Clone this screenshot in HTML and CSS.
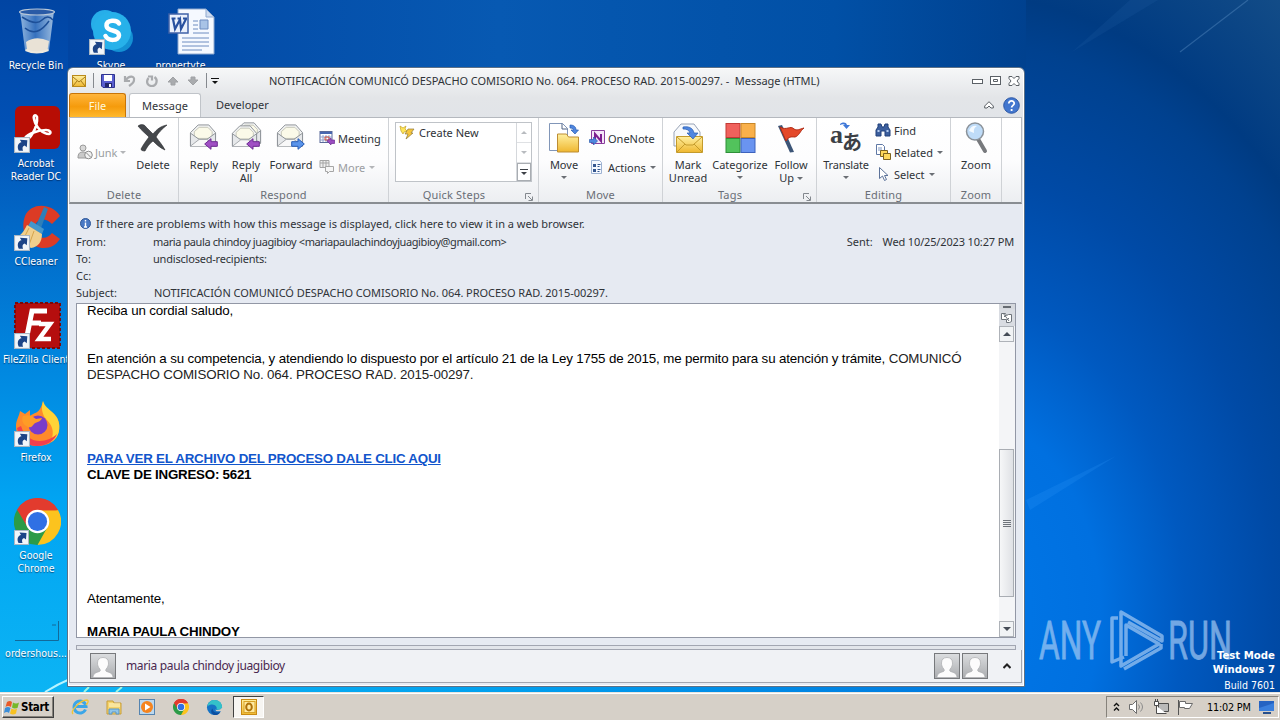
FILE: index.html
```
<!DOCTYPE html>
<html lang="en">

<head>
    <meta charset="UTF-8">
    <meta name="viewport" content="width=device-width, initial-scale=1.0">
    <title>Message (HTML)</title>
    <link rel="stylesheet" href="styles.css">
</head>

<body>
    <!-- Shared icons -->
    <svg width="0" height="0" class="defs">
        <defs>
            <linearGradient id="gold" x1="0" y1="0" x2="0" y2="1">
                <stop offset="0" stop-color="#fff0a0" />
                <stop offset="1" stop-color="#efb730" />
            </linearGradient>
            <linearGradient id="glass" x1="0" y1="0" x2="1" y2="0">
                <stop offset="0" stop-color="#a9c8e8" />
                <stop offset=".45" stop-color="#3f78c2" />
                <stop offset="1" stop-color="#b5cfe9" />
            </linearGradient>
            <linearGradient id="gray" x1="0" y1="0" x2="0" y2="1">
                <stop offset="0" stop-color="#dcdee0" />
                <stop offset="1" stop-color="#a9abae" />
            </linearGradient>
        </defs>
        <symbol id="shortcut" viewBox="0 0 15 15">
            <rect x=".5" y=".5" width="14" height="14" fill="#f2f6fa" stroke="#a9b6c4" />
            <path d="M4.500 13C2.500 9 4 5.500 7 5L5.500 2.500 12.500 3l-.5 6.500-2-1.500C8 8.500 7.500 10.500 8.500 13z" fill="#1c4487" />
        </symbol>
        <symbol id="open-mail" viewBox="0 0 28 28">
            <path d="M1 10L9 2h11l7 8v14H1z" fill="#f1f2f2" stroke="#8d9297" />
            <path d="M5 9l5-4.500h9L23.500 9v7H5z" fill="#fbfae9" stroke="#c5c6b8" />
            <path d="M1 10.500l9 6.500h8l9-6.500V24H1z" fill="#e6e8ea" stroke="#8d9297" />
            <path d="M1 24l9-7h8l9 7" fill="#f8f8f8" stroke="#a3a7ab" />
        </symbol>
        <symbol id="arrow-left" viewBox="0 0 14 12">
            <path d="M.7 6L7 .7v3h6.300v4.600H7v3z" fill="#a04fc4" stroke="#6d2b92" />
        </symbol>
        <symbol id="arrow-right" viewBox="0 0 14 12">
            <path d="M13.300 6L7 .7v3H.7v4.600H7v3z" fill="#5a94ea" stroke="#275cb5" />
        </symbol>
        <symbol id="person" viewBox="0 0 26 26">
            <rect x=".5" y=".5" width="25" height="25" fill="url(#gray)" stroke="#77797c" />
            <path d="M3 24.500c0-4 3-5 6.500-6 1-.5 1-1.500.3-2.500C8 14 7.500 12 7.500 10 7.500 6.500 9.500 4.500 13 4.500s5.500 2 5.500 5.500c0 2-.5 4-2.300 6-.7 1-.7 2 .3 2.500 3.500 1 6.500 2 6.500 6z" fill="#fcfcfc" stroke="#a9abad" stroke-width=".7" />
        </symbol>
        <symbol id="chrome" viewBox="0 0 48 48">
            <path d="M24 24L3.200 12A24 24 0 0 1 44.800 12z" fill="#e23b2e" />
            <path d="M24 24L44.800 12A24 24 0 0 1 24 48z" fill="#fcc31e" />
            <path d="M24 24L24 48A24 24 0 0 1 3.200 12z" fill="#2c9b47" />
            <path d="M24 12.500h20.800L34 30 24 48l10-18z" fill="#fcc31e" />
            <path d="M3.200 12L14 30h12l8 0-10 18z" fill="#2c9b47" />
            <path d="M3.200 12L14 30l10-17.500h20.800A24 24 0 0 0 3.200 12z" fill="#e23b2e" />
            <circle cx="24" cy="24" r="12" fill="#fff" />
            <circle cx="24" cy="24" r="9.800" fill="#2f70e4" />
        </symbol>
        <symbol id="launcher" viewBox="0 0 8 8">
            <path d="M.5 6V.5H6M3 3l4 4M7.500 3.500v4h-4" fill="none" stroke="#83888e" />
        </symbol>
    </svg>

    <div class="desktop">
        <svg class="light" width="1280" height="692" viewBox="0 0 1280 692">
            <path d="M1180 52L1248 0" stroke="#5f93c8" stroke-width="1.200" opacity=".4" />
            <path d="M1072 52L1130 0h28z" fill="#2a6ab0" opacity=".16" />
            <path d="M1026 500l90-44-86 54z" fill="#39a0ff" opacity=".18" />
            <path d="M45 692Q58 684 70 679" stroke="#b8f4ff" stroke-width="2" fill="none" />
            <path d="M84 692l5-5M116 692l6-5" stroke="#9df5e4" stroke-width="2" />
        </svg>

        <div class="desktop-icons">
            <div class="shortcut">
                <svg width="48" height="48" viewBox="0 0 48 48">
                    <path d="M7 3h34l-5 39q-12 6-24 0z" fill="url(#glass)" opacity=".85" />
                    <path d="M13 34q10-7 23-1l-1.500 9q-10 5-20.500 0z" fill="#e9e2d6" />
                    <path d="M9 9q14 9 20 3t11 0M12 20q12 10 24-7" fill="none" stroke="#1d4f98" stroke-width="1.500" />
                    <ellipse cx="24" cy="4" rx="17.500" ry="3" fill="#2a5ba6" stroke="#b9c8d8" stroke-width="1.200" />
                    <path d="M12.500 42q11 5 23 0" fill="none" stroke="#efe9dd" stroke-width="2" />
                </svg>
                <span>Recycle Bin</span>
            </div>
            <div class="shortcut skype">
                <svg width="48" height="48" viewBox="0 0 48 48">
                    <circle cx="17" cy="16" r="14" fill="#27aee9" />
                    <circle cx="31" cy="30" r="14" fill="#1491d4" />
                    <circle cx="24" cy="23" r="19" fill="#27b1ea" />
                    <path d="M31 15.500C29 11.500 18.500 11.500 18.500 17.500c0 6.500 12.500 3.500 12.500 10 0 5.500-10.500 6-13.500.5" fill="none" stroke="#fff" stroke-width="4.500" stroke-linecap="round" />
                    <use href="#shortcut" x="1" y="31" width="16" height="16" />
                </svg>
                <span>Skype</span>
            </div>
            <div class="shortcut document">
                <svg width="48" height="48" viewBox="0 0 48 48">
                    <path d="M10 1h28l8 8v37H10z" fill="#f5f9ff" stroke="#8fa9cf" />
                    <path d="M38 1v8h8z" fill="#cfdcef" stroke="#8fa9cf" />
                    <path d="M25 13h5M25 17h5M25 21h5M25 25h16M14 30h27M14 34h27M14 38h27M14 42h20" stroke="#6d8cc0" />
                    <path d="M32 12h8v9h-8z" fill="#a8c3e6" stroke="#6d8cc0" />
                    <rect x="1" y="6" width="19" height="19" fill="#e9f0fc" stroke="#3f62a8" stroke-width="1.500" />
                    <path d="M3.500 10.500h4M9.500 10.500h3M15 10.500h4M5 11l2 10 5-9.500 1 9.500 5-10" fill="none" stroke="#27509f" stroke-width="2.200" />
                </svg>
                <span>propertyte...</span>
            </div>
            <div class="shortcut">
                <svg width="48" height="48" viewBox="0 0 48 48">
                    <rect x="2" y="0" width="45" height="43" rx="6" fill="#b70d04" />
                    <path d="M12 34c5 0 13-13 12-23-1-3-4-2-3 2 2 9 9 15 15 15 3-1 1-4-3-4-8 0-18 4-21 8-1 1-1 2 0 2z" fill="none" stroke="#fff" stroke-width="2.600" />
                    <use href="#shortcut" x="1" y="31" width="16" height="16" />
                </svg>
                <span>Acrobat<br>Reader DC</span>
            </div>
            <div class="shortcut">
                <svg width="48" height="48" viewBox="0 0 48 48">
                    <path d="M47 12C39-1 18-2 12 12 6 29 17 44 31 44c7 0 12-3 16-9l-8-6c-5 7-14 6-17-1-3-9 7-18 17-8z" fill="#dc3b25" />
                    <path d="M31 3l4 2-7 19-5-2z" fill="#2e7fb8" />
                    <path d="M18 17l13 8-2 5-14-8z" fill="#4397cc" />
                    <path d="M14 21l15 9c0 8-4 13-11 14L2 34c6-2 9-7 12-13z" fill="#f0cf8c" />
                    <path d="M16 24l-7 14M21 27l-5 14" stroke="#d4a44d" />
                    <use href="#shortcut" x="1" y="31" width="16" height="16" />
                </svg>
                <span>CCleaner</span>
            </div>
            <div class="shortcut">
                <svg width="48" height="48" viewBox="0 0 48 48">
                    <rect x="2" y="1" width="45" height="45" fill="#b50e0e" stroke="#7d0808" stroke-width="2" stroke-dasharray="3 2" />
                    <path d="M14 34l5-25h15M17 21h11" fill="none" stroke="#fff" stroke-width="5" />
                    <path d="M26 22h11L26 37h12" fill="none" stroke="#fff" stroke-width="4.500" />
                    <use href="#shortcut" x="1" y="31" width="16" height="16" />
                </svg>
                <span>FileZilla Client</span>
            </div>
            <div class="shortcut">
                <svg width="48" height="48" viewBox="0 0 48 48">
                    <path d="M30 1c1 7 4 7 9 11 7 6 8 12 7 19-2 10-11 15-22 15C11 46 3 37 3 26c0-6 3-9 4-15l5 3 5-4v6c5-4 10-2 13-15z" fill="#ff8a2b" />
                    <path d="M30 1c2 6 5 7 9 11 7 6 8 12 7 19-1 5-4 9-8 11 4-12 1-17-6-24-3-6-4-9-2-17z" fill="#ffd338" />
                    <path d="M4 28c2 11 10 18 20 18 10 0 18-6 20-12-9 9-30 12-36-8z" fill="#f23f4e" />
                    <circle cx="25" cy="25" r="9.500" fill="#7a3cc9" />
                    <path d="M10 16c6-2 9 0 13 3l6-1c-1 4-6 4-8 6s-2 4-6 3c-5-2-7-7-5-11z" fill="#ff9c26" />
                    <use href="#shortcut" x="1" y="31" width="16" height="16" />
                </svg>
                <span>Firefox</span>
            </div>
            <div class="shortcut">
                <svg width="48" height="48" viewBox="0 0 48 48">
                    <use href="#chrome" x="1" width="47" height="47" />
                    <use href="#shortcut" x="1" y="32" width="15" height="15" />
                </svg>
                <span>Google<br>Chrome</span>
            </div>
            <div class="shortcut">
                <svg width="48" height="48" viewBox="0 0 48 48">
                    <path d="M2 44.500h43.500V25M39 29h4" fill="none" stroke="#12699a" />
                </svg>
                <span>ordershous...</span>
            </div>
        </div>

        <div class="watermark">
            <svg width="194" height="64" viewBox="0 0 194 64">
                <g class="watermark-text">
                    <text x="1" y="50" textLength="62" lengthAdjust="spacingAndGlyphs">ANY</text>
                    <text x="130" y="50" textLength="64" lengthAdjust="spacingAndGlyphs">RUN</text>
                </g>
                <g fill="none" stroke="#a9cdf5" stroke-width="3.500" stroke-linejoin="round" opacity=".68">
                    <path d="M80 9h-6v44l12-5" />
                    <path d="M88 47V16l33 19-38 22V3l41 24v5L90 13" />
                    <path d="M86 60l37-21v-4" />
                </g>
            </svg>
            <div class="build">
                <b>Test Mode</b>
                <b>Windows 7</b>
                <span>Build 7601</span>
            </div>
        </div>

        <div class="window">
            <div class="title-bar">
                <div class="quick-access">
                    <svg width="14" height="12" viewBox="0 0 14 12">
                        <rect x=".5" y=".5" width="13" height="11" fill="url(#gold)" stroke="#b98a1c" />
                        <path d="M1 2l6 5 6-5M1 11l4-5M13 11L9 6" fill="none" stroke="#a87b18" />
                    </svg>
                    <i class="bar"></i>
                    <svg width="14" height="14" viewBox="0 0 14 14">
                        <path d="M.5.5h13v13H2l-1.500-1.500z" fill="#5a5fd0" stroke="#30358f" />
                        <path d="M3 1h8v6H3z" fill="#fff" />
                        <path d="M4 9h7v4H4z" fill="#23276b" />
                        <path d="M8 10h2v3H8z" fill="#fff" />
                    </svg>
                    <svg class="faded" width="14" height="14" viewBox="0 0 14 14">
                        <path d="M2 2v5h5M3 6c3-5 9-4 8 0 0 3-2 4-5 6" fill="none" stroke="#a9abae" stroke-width="2.200" />
                    </svg>
                    <svg class="faded" width="14" height="14" viewBox="0 0 14 14">
                        <path d="M3 2.500h4v4M9.500 3c4 3 2 9-2.500 9S.5 8 3.500 4" fill="none" stroke="#a9abae" stroke-width="2.200" />
                    </svg>
                    <svg class="faded" width="12" height="12" viewBox="0 0 12 12">
                        <path d="M6 2l5 5H8v3H4V7H1z" fill="#a9abae" stroke="#a0a2a5" />
                    </svg>
                    <svg class="faded" width="12" height="12" viewBox="0 0 12 12">
                        <path d="M6 10L1 5h3V2h4v3h3z" fill="#a9abae" stroke="#a0a2a5" />
                    </svg>
                    <i class="bar"></i>
                    <svg class="customize" width="8" height="8" viewBox="0 0 8 8">
                        <path d="M0 1.500h8" stroke="#111" />
                        <path d="M1 4h6L4 7z" fill="#111" />
                    </svg>
                </div>
                <div class="title">NOTIFICACIÓN COMUNICÓ DESPACHO COMISORIO No. 064. PROCESO RAD. 2015-00297. - &nbsp;Message (HTML)</div>
                <div class="window-buttons">
                    <svg width="11" height="12" viewBox="0 0 11 12"><rect x=".5" y="4.500" width="10" height="4" fill="#fff" stroke="#5b6066" /></svg>
                    <svg width="11" height="12" viewBox="0 0 11 12"><rect x=".5" y="1.500" width="10" height="8" fill="#fff" stroke="#5b6066" /><path d="M3.500 4.500h4v2h-4z" fill="none" stroke="#5b6066" /></svg>
                    <svg width="12" height="12" viewBox="0 0 12 12"><path d="M1 1.500h3l2 2 2-2h3v2L9 6l2 2.500v2H8l-2-2-2 2H1v-2L3 6 1 3.500z" fill="#fff" stroke="#5b6066" /></svg>
                </div>
            </div>

            <div class="tabs">
                <div class="tab file">File</div>
                <div class="tab active">Message</div>
                <div class="tab">Developer</div>
                <div class="tab-tools">
                    <svg width="10" height="8" viewBox="0 0 10 8"><path d="M5 .7L9.300 5v2H7L5 5 3 7H.7V5z" fill="#fff" stroke="#5b6066" /></svg>
                    <svg width="17" height="17" viewBox="0 0 17 17">
                        <circle cx="8.500" cy="8.500" r="7.800" fill="#4377cf" stroke="#2d58a5" />
                        <path d="M5.800 6.500c0-3.500 5.600-3.300 5.400 0 0 1.800-2.600 2-2.600 4M8.600 12v2" fill="none" stroke="#fff" stroke-width="1.800" />
                    </svg>
                </div>
            </div>

            <div class="ribbon">
                <div class="group delete-group">
                    <div class="commands">
                        <div class="small-list junk">
                            <div class="small disabled">
                                <svg width="16" height="16" viewBox="0 0 16 16">
                                    <circle cx="6" cy="4" r="3" fill="#d8d8d8" stroke="#9a9a9a" />
                                    <path d="M1 14c0-5 2-6 5-6s4 1 5 4v2z" fill="#c9c9c9" stroke="#9a9a9a" />
                                    <circle cx="11.500" cy="11" r="3.800" fill="#f2f2f2" stroke="#8c8c8c" />
                                    <path d="M9 8.500l5 5" stroke="#8c8c8c" />
                                </svg>
                                Junk <i class="arrow"></i>
                            </div>
                        </div>
                        <div class="big w42">
                            <svg width="32" height="32" viewBox="0 0 32 32">
                                <path d="M1 4c3-2 6-2 8 1l7 7c4-5 8-8 14-9-5 4-9 8-11 12 3 4 7 9 9 13-5-2-9-6-12-9-4 3-6 6-8 10-3 0-4-1-4-2 2-4 5-8 8-12C8 11 4 8 1 4z" fill="#45484c" stroke="#26282b" stroke-width=".6" />
                            </svg>
                            Delete
                        </div>
                    </div>
                    <div class="caption">Delete</div>
                </div>

                <div class="group respond-group">
                    <div class="commands">
                        <div class="big w42">
                            <svg width="32" height="32" viewBox="0 0 32 32">
                                <use href="#open-mail" x="1" y="1" width="28" height="27" />
                                <use href="#arrow-left" x="16" y="16" width="14" height="12" />
                            </svg>
                            Reply
                        </div>
                        <div class="big w42">
                            <svg width="32" height="32" viewBox="0 0 32 32">
                                <use href="#open-mail" x="5" y="-1" width="27" height="26" />
                                <use href="#open-mail" x="1" y="2" width="27" height="26" />
                                <use href="#arrow-left" x="16" y="16" width="14" height="12" />
                            </svg>
                            Reply<br>All
                        </div>
                        <div class="big w48">
                            <svg width="32" height="32" viewBox="0 0 32 32">
                                <use href="#open-mail" x="1" y="1" width="28" height="27" />
                                <use href="#arrow-right" x="16" y="16" width="14" height="12" />
                            </svg>
                            Forward
                        </div>
                        <div class="small-list two">
                            <div class="small">
                                <svg width="16" height="16" viewBox="0 0 16 16">
                                    <rect x="1" y="1.500" width="12" height="11" fill="#fff" stroke="#5a6a9a" />
                                    <path d="M1 3h12" stroke="#4767b0" stroke-width="2" />
                                    <path d="M4 5v7M7 5v7M10 5v7M1 7h12M1 10h12" stroke="#8fa0cc" />
                                    <path d="M6 7h4v3H6z" fill="none" stroke="#d8523a" />
                                    <path d="M8 11l4-3v2h3.500v3.500H12V15z" fill="#9a4cc0" stroke="#6d2b92" stroke-width=".7" />
                                </svg>
                                Meeting
                            </div>
                            <div class="small disabled">
                                <svg width="16" height="16" viewBox="0 0 16 16">
                                    <path d="M1 1.500h9v7H1zM4 1v7M7 1v7M1 4h9" fill="#eee" stroke="#a5a5a5" />
                                    <path d="M6.500 7.500h8v5h-4l-2 2v-2h-2z" fill="#f6f6f6" stroke="#a5a5a5" />
                                </svg>
                                More <i class="arrow"></i>
                            </div>
                        </div>
                    </div>
                    <div class="caption">Respond</div>
                </div>

                <div class="group steps-group">
                    <div class="commands">
                        <div class="gallery">
                            <div class="gallery-item">
                                <svg width="16" height="16" viewBox="0 0 16 16">
                                    <path d="M1 1l3 2 3-2-1 3 2 2-3 1-1 2-2-3z" fill="#ffe65a" stroke="#c6a427" stroke-width=".7" />
                                    <path d="M9 4h6l-3 4h2l-7 6 2-5H6z" fill="#f7c63b" stroke="#8f7a3a" stroke-width=".7" />
                                </svg>
                                Create New
                            </div>
                            <div class="gallery-scroll">
                                <span><i class="up"></i></span>
                                <span><i class="down"></i></span>
                                <span class="on"><i class="more"></i></span>
                            </div>
                        </div>
                    </div>
                    <div class="caption steps-caption">Quick Steps<svg class="launcher" width="8" height="8"><use href="#launcher" /></svg></div>
                </div>

                <div class="group move-group">
                    <div class="commands">
                        <div class="big w42">
                            <svg width="32" height="32" viewBox="0 0 32 32">
                                <path d="M1.500 1.500h13l5 5v22h-18z" fill="#fff" stroke="#8196b8" />
                                <path d="M14 1.500V7h5.500" fill="none" stroke="#4f6285" />
                                <path d="M9.500 12h9l2 3h10v15h-21z" fill="url(#gold)" stroke="#bd8d33" />
                                <path d="M22 3c4 0 6 2 6 5h2.500L27 12l-4-4h2.500c0-1-1-2-3.500-2z" fill="#4f86e0" stroke="#265bb0" stroke-width=".7" />
                            </svg>
                            Move<i class="arrow"></i>
                        </div>
                        <div class="small-list two onenote">
                            <div class="small">
                                <svg width="16" height="16" viewBox="0 0 16 16">
                                    <path d="M2.500.5h13v13h-13z" fill="#f4e6f8" stroke="#8a3f9c" />
                                    <path d="M6 11V4l6 7V4" fill="none" stroke="#7d1f8f" stroke-width="2" />
                                    <path d="M.5 9.500h4V7l4 4-4 4v-2.500h-4z" fill="#4f86e0" stroke="#2c5cae" stroke-width=".7" />
                                </svg>
                                OneNote
                            </div>
                            <div class="small">
                                <svg width="16" height="16" viewBox="0 0 16 16">
                                    <path d="M2.500 1.500h8l2 2v11h-10z" fill="#f5f9ff" stroke="#9db2d2" />
                                    <path d="M4 5h3v3H4zM4 10h3v3H4z" fill="#35568e" />
                                    <path d="M8.500 5.500h3M8.500 7.500h2M8.500 10.500h3M8.500 12.500h2" stroke="#35568e" />
                                </svg>
                                Actions <i class="arrow"></i>
                            </div>
                        </div>
                    </div>
                    <div class="caption">Move</div>
                </div>

                <div class="group tags-group">
                    <div class="commands">
                        <div class="big w42">
                            <svg width="32" height="32" viewBox="0 0 32 32">
                                <path d="M2 10l7-8h13l6 8v14H2z" fill="#f7f9fc" stroke="#98a3b5" />
                                <path d="M4.500 14.500h26v16h-26z" fill="url(#gold)" stroke="#c49b2c" />
                                <path d="M5 15l9 8h7l9-8M5 30l8-8M30 30l-8-8" fill="none" stroke="#c49b2c" />
                                <path d="M11 5c6-1 10 1 11 6h4l-5 6-6-6h3c-1-3-3-4-7-4z" fill="#4f86e0" stroke="#265bb0" stroke-width=".7" />
                            </svg>
                            Mark<br>Unread
                        </div>
                        <div class="big w62">
                            <svg width="32" height="32" viewBox="0 0 32 32">
                                <rect x="2" y="1.500" width="14" height="14" fill="#f0615c" stroke="#c23a35" />
                                <rect x="17" y="1.500" width="14" height="14" fill="#f9b04a" stroke="#c88728" />
                                <rect x="2" y="16.500" width="14" height="14" fill="#52c35c" stroke="#2e8f39" />
                                <rect x="17" y="16.500" width="14" height="14" fill="#6a94f0" stroke="#3d62bd" />
                            </svg>
                            Categorize<i class="arrow"></i>
                        </div>
                        <div class="big w40">
                            <svg width="32" height="32" viewBox="0 0 32 32">
                                <path d="M3 4l4-1 12 27-4 .5z" fill="#3c5577" />
                                <path d="M5 5c7 4 10-2 14 2 3 2 6 0 10-1-4 3-5 8-9 9-4 0-6-1-9 4z" fill="#e4492a" stroke="#b02c16" />
                            </svg>
                            <span>Follow<br>Up <i class="arrow inline"></i></span>
                        </div>
                    </div>
                    <div class="caption tags-caption">Tags<svg class="launcher" width="8" height="8"><use href="#launcher" /></svg></div>
                </div>

                <div class="group editing-group">
                    <div class="commands">
                        <div class="big w50">
                            <div class="translate-icon">
                                <b>a</b><em>あ</em>
                                <svg width="10" height="7" viewBox="0 0 10 7"><path d="M0 2c3-2 6-2 7 1h3L6.500 7 3 3h2C4 2 2 2 0 3z" fill="#3f78d8" /></svg>
                            </div>
                            Translate<i class="arrow"></i>
                        </div>
                        <div class="small-list three">
                            <div class="small">
                                <svg width="16" height="16" viewBox="0 0 16 16">
                                    <path d="M3 2h3l1 3h2l1-3h3v3l2 3v6h-5V9H6v5H1V8l2-3z" fill="#3c5f9e" stroke="#20407a" />
                                    <path d="M2.500 9h2M11.500 9h2" stroke="#b5cdf0" stroke-width="2" />
                                </svg>
                                Find
                            </div>
                            <div class="small">
                                <svg width="16" height="16" viewBox="0 0 16 16">
                                    <path d="M1.500.5h6l2 2v8h-8z" fill="#fff" stroke="#5f78a5" />
                                    <path d="M3 4h4M3 6h4" stroke="#7f97c2" />
                                    <path d="M5.500 6.500h7v6h-7z" fill="#ffd95c" stroke="#7d6320" />
                                    <path d="M8.500 9.500h7v6h-7z" fill="#ffd95c" stroke="#7d6320" />
                                </svg>
                                Related <i class="arrow"></i>
                            </div>
                            <div class="small">
                                <svg width="16" height="16" viewBox="0 0 16 16">
                                    <path d="M4.500 1.500v11l3-2.500 2 4.500 2-1-2-4h3.500z" fill="#fff" stroke="#5c7299" />
                                </svg>
                                Select <i class="arrow"></i>
                            </div>
                        </div>
                    </div>
                    <div class="caption">Editing</div>
                </div>

                <div class="group zoom-group">
                    <div class="commands">
                        <div class="big w42">
                            <svg width="32" height="32" viewBox="0 0 32 32">
                                <path d="M18 17l7 12" stroke="#77797d" stroke-width="4" stroke-linecap="round" />
                                <circle cx="15" cy="9.500" r="8.500" fill="#bfdcf8" stroke="#8b9299" stroke-width="1.500" />
                                <path d="M9 9q2-6 8-5-4 2-3 7z" fill="#f4faff" />
                            </svg>
                            Zoom
                        </div>
                    </div>
                    <div class="caption">Zoom</div>
                </div>
            </div>

            <div class="message-header">
                <div class="info-bar">
                    <svg width="11" height="11" viewBox="0 0 11 11">
                        <circle cx="5.500" cy="5.500" r="5" fill="#4a79c4" stroke="#2f5797" />
                        <path d="M5.500 2v1.500M5.500 4.500V9M4 9h3" stroke="#fff" stroke-width="1.400" />
                    </svg>
                    <span>If there are problems with how this message is displayed, click here to view it in a web browser.</span>
                </div>
                <div class="field">
                    <span class="field-label">From:</span>
                    <span class="field-value">maria paula chindoy juagibioy &lt;mariapaulachindoyjuagibioy@gmail.com&gt;</span>
                    <span class="sent">Sent:</span>
                    <span class="date">Wed 10/25/2023 10:27 PM</span>
                </div>
                <div class="field">
                    <span class="field-label">To:</span>
                    <span class="field-value recipients">undisclosed-recipients:</span>
                </div>
                <div class="field">
                    <span class="field-label">Cc:</span>
                </div>
                <div class="field">
                    <span class="field-label">Subject:</span>
                    <span class="field-value subject">NOTIFICACIÓN COMUNICÓ DESPACHO COMISORIO No. 064. PROCESO RAD. 2015-00297.</span>
                </div>
            </div>

            <div class="message">
                <div class="message-body">
                    <p class="greeting">Reciba un cordial saludo,</p>
                    <p class="request">En atención a su competencia, y atendiendo lo dispuesto por el artículo 21 de la Ley 1755 de 2015, me permito para su atención y trámite, <span class="case">COMUNICÓ<br>DESPACHO COMISORIO No. 064. PROCESO RAD. 2015-00297.</span></p>
                    <p class="access"><a class="link" href="#">PARA VER EL ARCHIVO DEL PROCESO DALE CLIC AQUI</a><br><b>CLAVE DE INGRESO: 5621</b></p>
                    <p class="closing">Atentamente,</p>
                    <p class="signature">MARIA PAULA CHINDOY</p>
                </div>
                <div class="scrollbar">
                    <div class="split-handle"></div>
                    <div class="ruler">
                        <svg width="13" height="13" viewBox="0 0 13 13"><path d="M1.500 2.500h4l1 2 2-1h3v7l-2 1h-3v-3h-5zM3 2l6 8M4 6l2-2M7 9l2-2" fill="#fff" stroke="#6d737a" /></svg>
                    </div>
                    <div class="scroll-button"><i class="up"></i></div>
                    <div class="track">
                        <div class="thumb"><i></i></div>
                    </div>
                    <div class="scroll-button"><i class="down"></i></div>
                </div>
            </div>

            <div class="splitter"></div>
            <div class="people">
                <svg width="26" height="26"><use href="#person" /></svg>
                <span>maria paula chindoy juagibioy</span>
                <svg class="first" width="26" height="26"><use href="#person" /></svg>
                <svg width="26" height="26"><use href="#person" /></svg>
                <svg class="collapse" width="8" height="6" viewBox="0 0 8 6"><path d="M.5 5L4 1.500 7.500 5" fill="none" stroke="#222" stroke-width="2" /></svg>
            </div>
        </div>
    </div>

    <div class="taskbar">
        <div class="start">
            <svg width="16" height="15" viewBox="0 0 16 15">
                <path d="M3 2q3-2 5 0L7 7Q4 5 1.500 7z" fill="#ea5a27" />
                <path d="M9 2.500q3 2 6 0L13.500 8Q10 9 8 7.500z" fill="#76b82a" />
                <path d="M1 8q3-2 5.500 0L5 13Q3 11 0 13z" fill="#3c8ed8" />
                <path d="M7.500 8.500q3 2 5.500 0L12 13.500q-3 2-6 0z" fill="#f7c120" />
            </svg>
            Start
        </div>
        <div class="launch">
            <svg width="18" height="18" viewBox="0 0 18 18">
                <path d="M14.500 11.500A6 6 0 1 1 15 8.500H5" fill="none" stroke="#3ba6e8" stroke-width="3" />
                <path d="M2 16C-1 13 9 2 16 2c3 1-1 5-1 5" fill="none" stroke="#f0c537" stroke-width="1.400" />
            </svg>
        </div>
        <div class="launch">
            <svg width="18" height="18" viewBox="0 0 18 18">
                <path d="M2 3h6l1 2h7v11H2z" fill="#f5d36b" stroke="#c79d38" />
                <path d="M4 6h11M4 8h11" stroke="#fff7d0" />
                <path d="M4 16v-5h10v5h-3v-2H7v2z" fill="#8fc6ea" stroke="#5a95c4" />
            </svg>
        </div>
        <div class="launch">
            <svg width="18" height="18" viewBox="0 0 18 18">
                <rect x="1.500" y="1.500" width="15" height="15" fill="#bcd8ee" stroke="#5584b0" />
                <circle cx="9" cy="9" r="6" fill="#f5841f" />
                <path d="M7 5.500L12.500 9 7 12.500z" fill="#fff" />
            </svg>
        </div>
        <div class="launch"><svg width="16" height="16"><use href="#chrome" /></svg></div>
        <div class="launch">
            <svg width="17" height="17" viewBox="0 0 18 18">
                <circle cx="9" cy="9" r="8" fill="#1673c5" />
                <path d="M1.500 8C2 3 6 1 9 1c5 0 8 3.500 8 7 0 3-3 4-6 3 2-3-4-8-9.500-3z" fill="#34c1c9" />
                <path d="M7 10c0 4 4 5 8 4-1 2-3 3-6 3-3-1-5-4-2-7z" fill="#0c4fa0" />
                <path d="M10 11c2 1 5 1 7-2v4h-5c-1 0-2-1-2-2z" fill="#d6d0c8" />
            </svg>
        </div>
        <div class="outlook">
            <svg width="16" height="16" viewBox="0 0 16 16">
                <rect x=".5" y=".5" width="15" height="15" fill="url(#gold)" stroke="#c98a12" />
                <rect x="3" y="2.500" width="11" height="11" fill="#ffe9a0" stroke="#d9a227" />
                <ellipse cx="8" cy="8" rx="2.800" ry="3.500" fill="none" stroke="#b0730a" stroke-width="2" />
            </svg>
        </div>
        <div class="tray">
            <svg width="7" height="10" viewBox="0 0 7 10"><path d="M1 4l2.500-2.500L6 4M1 8.500L3.500 6 6 8.500" fill="none" stroke="#111" stroke-width="1.400" /></svg>
            <svg width="17" height="16" viewBox="0 0 17 16">
                <path d="M1.500 5.500h3l4-4v13l-4-4h-3z" fill="#fff" stroke="#6d6d6d" />
                <path d="M10.500 5.500q2 2.500 0 5M12.500 3.500q4 4.500 0 9" fill="none" stroke="#8a8a8a" />
            </svg>
            <svg width="16" height="16" viewBox="0 0 16 16">
                <path d="M5.500 4.500h10v8h-10z" fill="#b9b9b9" stroke="#4c4c4c" />
                <path d="M1.500 2.500h4v4h-4zM2.500 0v2M4.500 0v2M3.500 7v7.500h10" fill="#fff" stroke="#4c4c4c" />
            </svg>
            <svg width="17" height="16" viewBox="0 0 17 16">
                <path d="M1.500 1v15" stroke="#555" />
                <path d="M2.500 2.500h6v2h7l-3 5h-5v-1h-5z" fill="#fff" stroke="#6a6a6a" />
            </svg>
            <span>11:02 PM</span>
            <svg width="15" height="13" viewBox="0 0 15 13">
                <path d="M0 0h15v10H0z" fill="#2563c2" />
                <path d="M0 7L15 2v8H0z" fill="#3a7fdd" />
                <path d="M4 12h8" stroke="#274f8c" stroke-width="2" />
            </svg>
        </div>
    </div>
</body>

</html>
```
FILE: styles.css
```
* {
    box-sizing: border-box;
}

body {
    margin: 0;
    width: 1280px;
    height: 720px;
    overflow: hidden;
    font-family: "Noto Sans", sans-serif;
    font-size: 11px;
    color: #2f3338;
}

svg {
    display: block;
    flex: none;
}

p {
    margin: 0;
}

.defs {
    position: absolute;
}

/* Desktop */
.desktop {
    position: relative;
    height: 692px;
    background:
        linear-gradient(180deg, #0145a3 0, #0150b4 120px, #0267c6 220px, #0188e0 370px, #01a4f2 500px, #0cb4f4 692px) 0 0 / 68px 692px no-repeat,
        linear-gradient(90deg, #0cb4f4 0, #02a0ee 45%, #0074dd 100%) 68px 687px / 958px 5px no-repeat,
        linear-gradient(90deg, #0145a3 0, #0759b2 45%, #0150a6 80%, #00418f 100%) 68px 0 / 958px 68px no-repeat,
        radial-gradient(ellipse 560px 780px at 960px 610px, #0078e8 0, #0070e0 25%, #0059c0 40%, #004aa6 56%, #00418f 73%, #003b82 79%, #164f88 100%);
}

.light {
    position: absolute;
    top: 0;
    left: 0;
}

.desktop-icons {
    position: absolute;
    top: 8px;
    left: -2px;
    display: grid;
    grid-template-columns: 76px 74px 74px;
    grid-template-rows: repeat(7, 98px);
}

.shortcut {
    display: flex;
    flex-direction: column;
    align-items: center;
    gap: 3px;
    font-family: "DejaVu Sans Condensed", "DejaVu Sans", sans-serif;
    font-size: 10.5px;
    line-height: 13px;
    text-align: center;
    white-space: nowrap;
    color: #fff;
    text-shadow: 0 1px 1px rgba(0, 20, 60, .6);
}

.shortcut > svg {
    margin-left: 2px;
}

.document > svg {
    margin-left: 14px;
}

.shortcut:nth-child(n+4) {
    grid-column: 1;
}

/* Watermark */
.watermark {
    position: absolute;
    left: 1038px;
    top: 609px;
}

.watermark-text {
    font-family: Roboto, sans-serif;
    font-size: 53px;
    fill: #a9cdf5;
    stroke: #a9cdf5;
    stroke-width: .8px;
    opacity: .68;
}

.build {
    position: absolute;
    top: 40px;
    left: 96px;
    width: 141px;
    font-family: "DejaVu Sans Condensed", "DejaVu Sans", sans-serif;
    font-size: 10.5px;
    line-height: 13px;
    color: #fff;
    text-align: right;
}

.build b,
.build span {
    display: block;
    white-space: nowrap;
}

.build b {
    font-size: 11.3px;
}

.build b + b {
    margin-top: 1px;
}

.build span {
    margin-top: 3px;
}

/* Message window */
.window {
    position: absolute;
    left: 67px;
    top: 67px;
    width: 958px;
    height: 620px;
    display: flex;
    flex-direction: column;
    padding: 0 2px 3px 1px;
    border: 1px solid #5d7187;
    border-radius: 6px 6px 0 0;
    background: linear-gradient(#f6f7f8 0, #e3e5e8 30px, #e1e4e8 50px, #e6eaf2 140px);
    box-shadow: inset 0 0 0 1px #fff;
}

.title-bar {
    display: flex;
    align-items: center;
    height: 25px;
    padding: 0 2px 0 3px;
}

.quick-access {
    display: flex;
    align-items: center;
    width: 197px;
    gap: 7px;
}

.quick-access .faded {
    margin-left: 1px;
}

.quick-access .customize {
    margin-left: -3px;
}

.bar {
    width: 1px;
    height: 15px;
    background: #85898e;
}

.title {
    flex: 1;
    white-space: pre;
    letter-spacing: -.05px;
}

.window-buttons {
    display: flex;
    gap: 7px;
}

.tabs {
    display: flex;
    height: 24px;
    padding-right: 2px;
}

.tab {
    padding: 0 15px;
    line-height: 24px;
}

.tab.file {
    width: 57px;
    border: 1px solid #c87508;
    border-bottom: 0;
    border-radius: 3px 3px 0 0;
    background: linear-gradient(#ffb53c, #f59b0c 55%, #ffb92e);
    color: #fff8dc;
    text-align: center;
    line-height: 23px;
}

.tab.active {
    width: 72px;
    margin-left: 3px;
    padding: 0;
    border: 1px solid #c0c4c9;
    border-bottom: 0;
    border-radius: 3px 3px 0 0;
    background: #fff;
    text-align: center;
}

.tab-tools {
    display: flex;
    align-items: center;
    gap: 9px;
    margin-left: auto;
}

/* Ribbon */
.ribbon {
    display: flex;
    height: 87px;
    border: 1px solid #b4b8be;
    border-width: 1px 1px 2px;
    border-bottom-color: #898d92;
    background: linear-gradient(#fff, #fdfdfe 50%, #eceef1);
}

.group {
    display: flex;
    flex-direction: column;
    border-right: 1px solid #cfd2d6;
}

.delete-group { width: 109px; }
.respond-group { width: 210px; }
.steps-group { width: 150px; }
.move-group { width: 124px; }
.tags-group { width: 154px; }
.editing-group { width: 134px; }
.zoom-group { width: 51px; }

.commands {
    display: flex;
    height: 70px;
    padding: 4px 0 0 4px;
}

.zoom-group .commands {
    padding-left: 4px;
}

.caption {
    position: relative;
    line-height: 14px;
    text-align: center;
    color: #696e76;
    letter-spacing: .2px;
}

.steps-caption,
.tags-caption {
    padding-right: 19px;
}

.launcher {
    position: absolute;
    right: 5px;
    top: 5px;
}

.big {
    display: flex;
    flex-direction: column;
    align-items: center;
    line-height: 13px;
    text-align: center;
    white-space: nowrap;
}

.big > svg,
.translate-icon {
    margin-bottom: 4px;
}

.w40 { width: 40px; }
.w42 { width: 42px; }
.w48 { width: 48px; }

.w50 {
    width: 50px;
    letter-spacing: -.2px;
}

.w62 { width: 62px; }

.arrow {
    display: inline-block;
    border: 3px solid transparent;
    border-top-color: #6a6e74;
    border-bottom: 0;
}

.big > .arrow {
    margin-top: 5px;
}

.arrow.inline {
    margin-bottom: 2px;
}

.small-list {
    display: flex;
    flex-direction: column;
    padding-left: 4px;
}

.small-list.junk {
    width: 58px;
    padding: 20px 0 0 3px;
}

.small-list.two {
    gap: 9px;
    padding-top: 6px;
}

.small-list.onenote {
    padding-left: 4px;
}

.small-list.three {
    gap: 2px;
    margin-top: -2px;
}

.small {
    display: flex;
    align-items: center;
    gap: 3px;
    height: 20px;
    white-space: nowrap;
}

.junk .small {
    gap: 2px;
}

.small .arrow {
    margin-left: 1px;
}

.disabled {
    color: #9a9da1;
}

.disabled .arrow {
    border-top-color: #b3b5b8;
}

.gallery {
    display: flex;
    width: 137px;
    height: 60px;
    margin-left: 2px;
    border: 1px solid #bfc3c8;
    background: #fff;
}

.gallery-item {
    display: flex;
    flex: 1;
    gap: 4px;
    height: 19px;
    padding-left: 3px;
    align-items: center;
}

.gallery-scroll {
    width: 15px;
    border-left: 1px solid #d5d8dc;
}

.gallery-scroll span {
    display: flex;
    align-items: center;
    justify-content: center;
    height: 20px;
    border-bottom: 1px solid #dfe1e4;
}

.gallery-scroll .on {
    height: 18px;
    border: 1px solid #a9adb2;
}

.up,
.down,
.more {
    border: 3px solid transparent;
}

.up {
    border-top: 0;
    border-bottom-color: #b8bbbf;
}

.down {
    border-bottom: 0;
    border-top-color: #b8bbbf;
}

.more {
    position: relative;
    top: 1px;
    border-bottom: 0;
    border-top-color: #3c4046;
}

.more::before {
    content: "";
    position: absolute;
    left: -4px;
    top: -6px;
    width: 8px;
    height: 1px;
    background: #3c4046;
}

.translate-icon {
    position: relative;
    width: 32px;
    height: 32px;
    color: #3c4045;
}

.translate-icon b {
    position: absolute;
    left: 0;
    top: 3px;
    font: bold 26px/20px "Liberation Serif", serif;
}

.translate-icon em {
    position: absolute;
    left: 12px;
    top: 10px;
    font: bold 20px/20px "Noto Sans CJK JP", sans-serif;
}

.translate-icon svg {
    position: absolute;
    left: 10px;
    top: 0;
}

/* Message header */
.message-header {
    height: 99px;
    padding: 10px 8px 0 7px;
    line-height: 17px;
    white-space: nowrap;
}

.info-bar {
    display: flex;
    align-items: center;
    gap: 5px;
    height: 19px;
    padding-left: 4px;
}

.field {
    display: flex;
    height: 17px;
}

.field-label {
    width: 77px;
}

.field-value {
    flex: 1;
    letter-spacing: -.4px;
}

.recipients {
    letter-spacing: -.2px;
}

.subject {
    padding-left: 1px;
    letter-spacing: -.05px;
}

.sent {
    margin-right: 10px;
}

.date {
    letter-spacing: -.15px;
}

/* Message text */
.message {
    display: flex;
    height: 335px;
    margin: 0 6px 0 7px;
    border: 1px solid #9297a5;
    background: #fff;
}

.message-body {
    flex: 1;
    padding-left: 10px;
    overflow: hidden;
    font-family: "Liberation Sans", Arial, sans-serif;
    font-size: 13.33px;
    line-height: 16px;
    letter-spacing: -.145px;
    color: #000;
    white-space: nowrap;
}

.message-body p:first-child {
    margin-top: -1px;
}

.request {
    margin-top: 32px;
}

.case {
    color: #222;
}

.access {
    margin-top: 68px;
    font-weight: bold;
    letter-spacing: -.23px;
}

.link {
    color: #1155cc;
}

.closing {
    margin-top: 108px;
}

.signature {
    margin-top: 17px;
    font-weight: bold;
    letter-spacing: -.2px;
}

.scrollbar {
    display: flex;
    flex-direction: column;
    width: 16px;
    background: #f4f5f7;
}

.split-handle {
    height: 5px;
    border: 1px solid #d5d8dd;
    border-width: 2px 4px 1px;
    background: #666b72;
}

.ruler {
    height: 17px;
    padding: 2px 1px;
    background: #d9dce2;
}

.scroll-button {
    display: flex;
    align-items: center;
    justify-content: center;
    width: 15px;
    height: 16px;
    border: 1px solid #aeb2b8;
    background: #f1f3f5;
}

.scroll-button i {
    border-width: 4px;
}

.scroll-button .up {
    border-top: 0;
    border-bottom-color: #454c57;
}

.scroll-button .down {
    border-bottom: 0;
    border-top-color: #454c57;
}

.track {
    flex: 1;
    padding-top: 107px;
}

.thumb {
    display: flex;
    align-items: center;
    justify-content: center;
    width: 15px;
    height: 148px;
    border: 1px solid #a9adb3;
    background: linear-gradient(90deg, #f6f7f8, #dfe1e5);
}

.thumb i {
    width: 8px;
    height: 7px;
    background: repeating-linear-gradient(#6f747b 0 1px, transparent 1px 2px);
}

.splitter {
    height: 5px;
    margin: 7px 6px 0 7px;
    border: 1px solid #a2a6b2;
    background: #e2e5eb;
}

/* People pane */
.people {
    display: flex;
    align-items: center;
    flex: 1;
    padding-left: 20px;
    border: 1px solid #a2a6b0;
    border-top: 0;
    background: #f0f2f5;
}

.people span {
    margin: 0 0 2px 10px;
    font-size: 12px;
    letter-spacing: -.35px;
    color: #4a2950;
}

.people .first {
    margin: 0 2px 0 auto;
}

.people .collapse {
    margin: 0 10px 0 15px;
}

/* Taskbar */
.taskbar {
    display: flex;
    align-items: center;
    height: 28px;
    padding: 1px 0 0 2px;
    border-top: 1px solid #e8e5df;
    background: #d6d0c8;
    box-shadow: inset 0 1px #fff;
}

.start {
    display: flex;
    align-items: center;
    gap: 1px;
    width: 52px;
    height: 22px;
    margin-right: 9px;
    padding-left: 1px;
    border: 1px solid #fff;
    border-right-color: #404040;
    border-bottom-color: #404040;
    box-shadow: inset -1px -1px #86827b;
    font-family: "DejaVu Sans Condensed", "DejaVu Sans", sans-serif;
    font-size: 11.5px;
    font-weight: bold;
    letter-spacing: -.3px;
    color: #000;
}

.launch {
    display: flex;
    justify-content: center;
    width: 33.7px;
}

.outlook {
    display: flex;
    align-items: center;
    justify-content: center;
    width: 31px;
    height: 22px;
    margin-left: 2px;
    border: 1px solid #fff;
    border-top-color: #404040;
    border-left-color: #404040;
    background: #f7f5f2;
}

.tray {
    display: flex;
    align-items: center;
    width: 173px;
    height: 22px;
    margin: 0 1px 0 auto;
    padding-left: 6px;
    gap: 8px;
    border: 1px solid #86827b;
    border-right-color: #fff;
    border-bottom-color: #fff;
    font-family: "DejaVu Sans Condensed", "DejaVu Sans", sans-serif;
    font-size: 10.8px;
    white-space: nowrap;
    color: #000;
}

.tray span {
    margin-left: 5px;
    letter-spacing: -.2px;
}
```
